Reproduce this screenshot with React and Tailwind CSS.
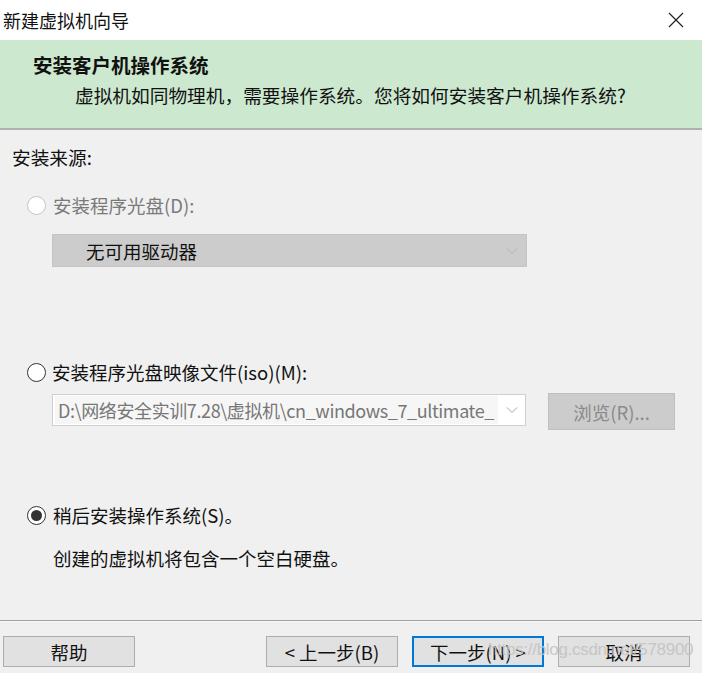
import React from "react";

function Radio({ state }) {
  if (state === "disabled") {
    return (
      <span className="box-border w-[19px] h-[19px] rounded-full border border-[#c4c4c4] bg-white shrink-0" />
    );
  }
  if (state === "checked") {
    return (
      <span className="box-border w-[19px] h-[19px] rounded-full border-[1.5px] border-[#333333] bg-white shrink-0 flex items-center justify-center">
        <span className="w-[11px] h-[11px] rounded-full bg-[#333333]" />
      </span>
    );
  }
  return (
    <span className="box-border w-[19px] h-[19px] rounded-full border-[1.5px] border-[#333333] bg-white shrink-0" />
  );
}

function Chevron({ color = "#a6a6a6" }) {
  return (
    <svg width="12" height="8" viewBox="0 0 12 8" className="shrink-0">
      <path d="M1 1.5 L6 6.5 L11 1.5" fill="none" stroke={color} strokeWidth="1" />
    </svg>
  );
}

function Btn({ children, primary, className = "" }) {
  return (
    <div
      className={
        "box-border h-[31px] w-[132px] flex items-center justify-center bg-[#e1e1e1] text-[18.5px] leading-[24px] text-[#111] " +
        (primary ? "border-2 border-[#0078d7] " : "border border-[#adadad] ") +
        className
      }
    >
      {children}
    </div>
  );
}

export default function App() {
  return (
    <div className="relative w-[702px] h-[673px] overflow-hidden bg-[#f0f0f0] font-['Noto_Sans_CJK_SC','Microsoft_YaHei',sans-serif] text-[#1a1a1a] flex flex-col">
      {/* Title bar */}
      <div className="h-[40px] bg-white flex items-center justify-between pl-[3px] pr-[18px]">
        <span className="text-[18px] leading-[24px] text-[#111]">新建虚拟机向导</span>
        <svg width="16" height="16" viewBox="0 0 16 16">
          <path d="M1 1 L15 15 M15 1 L1 15" stroke="#222" strokeWidth="1.2" fill="none" />
        </svg>
      </div>

      {/* Green header */}
      <div className="h-[90px] box-border bg-[#cce8cf] border-b-2 border-[#b0b0b0] pt-[13px]">
        <div className="pl-[33px] text-[19.5px] leading-[24px] font-bold text-[#111]">安装客户机操作系统</div>
        <div className="pl-[75px] mt-[6px] text-[18.7px] leading-[24px] text-[#111]">
          虚拟机如同物理机，需要操作系统。您将如何安装客户机操作系统?
        </div>
      </div>

      {/* Body */}
      <div className="pl-[12px] mt-[15px] text-[18.7px] leading-[24px] text-[#111]">安装来源:</div>

      <div className="mt-[24px] flex items-center h-[24px] pl-[27px] gap-[7px]">
        <Radio state="disabled" />
        <span className="text-[18.5px] leading-[24px] text-[#7a7a7a]">安装程序光盘(D):</span>
      </div>

      <div className="mt-[17px] ml-[52px] w-[475px] h-[33px] box-border bg-[#cccccc] border border-[#c4c4c4] flex items-center justify-between pl-[33px] pr-[8px]">
        <span className="text-[18.5px] leading-[24px] text-[#111]">无可用驱动器</span>
        <Chevron color="#b4b4b4" />
      </div>

      <div className="mt-[93px] flex items-center h-[24px] pl-[27px] gap-[6px]">
        <Radio state="unchecked" />
        <span className="text-[18.5px] leading-[24px] text-[#111]">安装程序光盘映像文件(iso)(M):</span>
      </div>

      <div className="mt-[9px] flex items-start">
        <div className="mt-[1px] ml-[52px] w-[474px] h-[32px] box-border bg-white border border-[#cfcfcf] flex items-center pl-[2px] pr-[7px]">
          <div className="w-[443px] h-[28px] bg-[#f6f6f6] overflow-hidden whitespace-nowrap flex items-center pl-[3px]">
            <span className="text-[18px] leading-[24px] text-[#777777] tracking-[-0.4px]">
              D:\网络安全实训7.28\虚拟机\cn_windows_7_ultimate_
            </span>
          </div>
          <div className="flex-1 flex justify-end">
            <Chevron color="#a6a6a6" />
          </div>
        </div>
        <div className="ml-[22px] w-[127px] h-[37px] box-border bg-[#cccccc] border border-[#bfbfbf] flex items-center justify-center">
          <span className="text-[18.5px] leading-[24px] text-[#8a8a8a]">浏览(R)...</span>
        </div>
      </div>

      <div className="mt-[73px] flex items-center h-[24px] pl-[27px] gap-[7px]">
        <Radio state="checked" />
        <span className="text-[18.5px] leading-[24px] text-[#111]">稍后安装操作系统(S)。</span>
      </div>

      <div className="mt-[19px] pl-[53px] text-[18.5px] leading-[24px] text-[#111]">创建的虚拟机将包含一个空白硬盘。</div>

      {/* Separator */}
      <div className="mt-[50px] h-[2px] border-t border-[#a0a0a0] border-b border-b-[#f8f8f8]" />

      {/* Buttons */}
      <div className="mt-[14px] flex items-center pl-[3px]">
        <Btn>帮助</Btn>
        <Btn className="ml-[131px]">&lt; 上一步(B)</Btn>
        <Btn primary className="ml-[14px]">下一步(N) &gt;</Btn>
        <Btn className="ml-[14px]">取消</Btn>
      </div>

      {/* Watermark */}
      <span className="absolute left-[488px] top-[639px] text-[17px] leading-[22px] font-['Liberation_Sans',sans-serif] text-[#c4c4c4] tracking-[-0.3px] whitespace-nowrap pointer-events-none opacity-90">
        https://blog.csdn.net/578900
      </span>
    </div>
  );
}
